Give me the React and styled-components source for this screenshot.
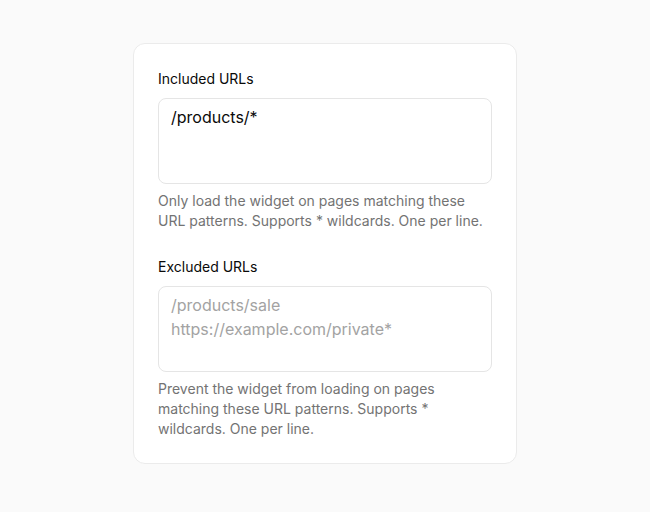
import styled, { createGlobalStyle } from "styled-components";

const GlobalStyle = createGlobalStyle`
  * {
    box-sizing: border-box;
  }
  body {
    margin: 0;
    background: #fafafa;
    font-family: Inter, "Noto Sans", sans-serif;
    color: #0a0a0a;
  }
`;

const Page = styled.div`
  display: flex;
  justify-content: center;
  padding-top: 43px;
`;

const Card = styled.div`
  width: 384px;
  background: #fff;
  border: 1px solid #ebebeb;
  border-radius: 12px;
  padding: 24px;
  display: flex;
  flex-direction: column;
  gap: 25px;
`;

const Field = styled.div`
  display: flex;
  flex-direction: column;
`;

const Label = styled.label`
  font-size: 14px;
  line-height: 20px;
  font-weight: 400;
  margin-bottom: 9px;
  margin-top: 1px;
`;

const TextArea = styled.textarea`
  display: block;
  width: 100%;
  height: 86px;
  resize: none;
  border: 1px solid #e5e5e5;
  border-radius: 8px;
  padding: 6px 12px;
  font-family: inherit;
  font-size: 16px;
  line-height: 24px;
  color: #0a0a0a;
  background: #fff;
  outline: none;

  &::placeholder {
    color: #a3a3a3;
  }
`;

const Help = styled.p`
  margin: 7px 0 0;
  font-size: 14px;
  line-height: 20px;
  color: #737373;
`;

const fields = [
  {
    id: "included",
    label: "Included URLs",
    value: "/products/*",
    placeholder: "",
    help: "Only load the widget on pages matching these URL patterns. Supports * wildcards. One per line.",
  },
  {
    id: "excluded",
    label: "Excluded URLs",
    value: "",
    placeholder: "/products/sale\nhttps://example.com/private*",
    help: "Prevent the widget from loading on pages matching these URL patterns. Supports * wildcards. One per line.",
  },
];

const App = () => {
  return (
    <Page>
      <GlobalStyle />
      <Card>
        {fields.map(field => (
          <Field key={field.id}>
            <Label htmlFor={field.id}>{field.label}</Label>
            <TextArea
              id={field.id}
              rows={3}
              defaultValue={field.value}
              placeholder={field.placeholder}
            />
            <Help>{field.help}</Help>
          </Field>
        ))}
      </Card>
    </Page>
  );
};

export default App;
